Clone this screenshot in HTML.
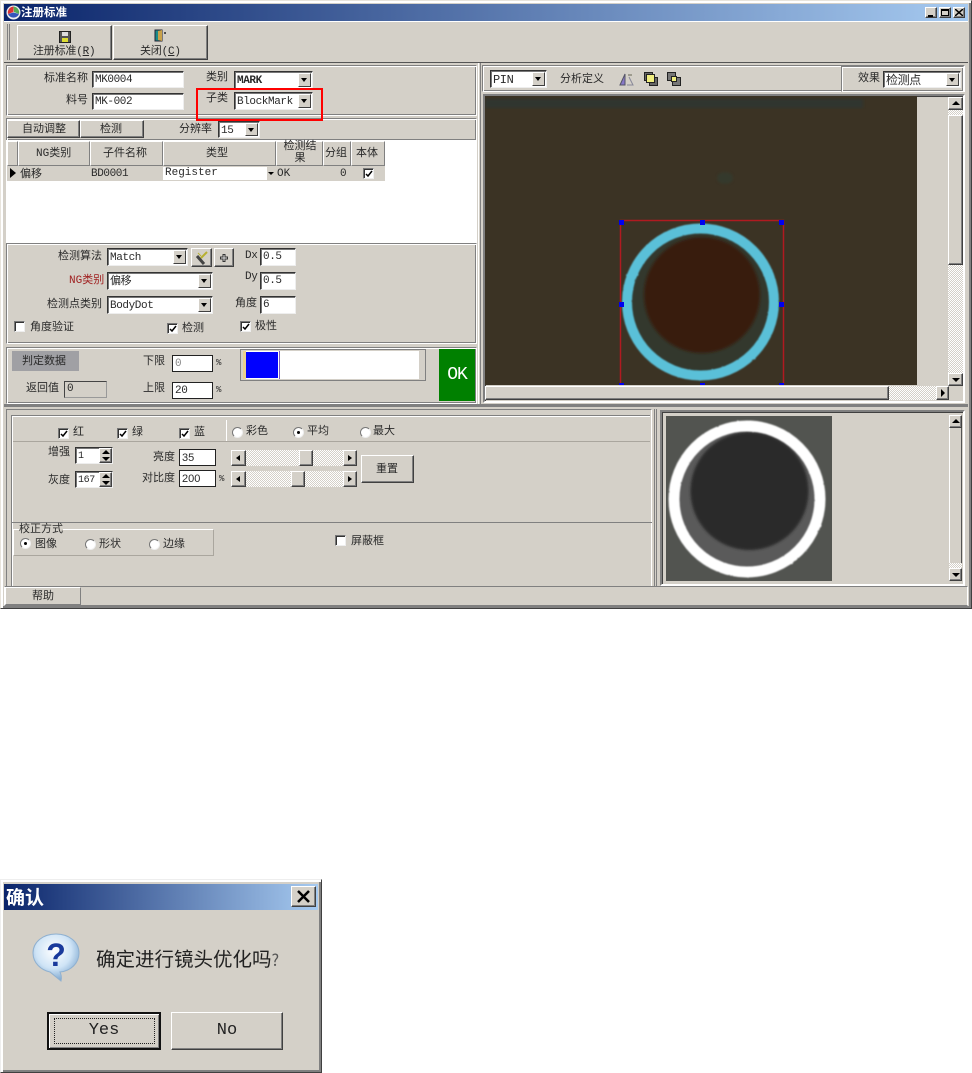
<!DOCTYPE html>
<html><head><meta charset="utf-8"><title>注册标准</title>
<style>
html,body{margin:0;padding:0;background:#fff}
body{position:relative;width:972px;height:1073px;overflow:hidden;font:11px/14px "Liberation Mono","WenQuanYi Zen Hei","Noto Sans CJK SC",monospace;color:#2a2a2a;filter:blur(.3px)}
div,span,i,b{box-sizing:border-box}
.a{position:absolute}
.t{position:absolute;white-space:nowrap;line-height:14px;margin-top:1px}
.g{background:#d4d0c8}
.up{background:#d4d0c8;border:1px solid;border-color:#fff #404040 #404040 #fff;box-shadow:inset -1px -1px 0 #808080}
.hd{background:#d4d0c8;border:1px solid;border-color:#fff #808080 #808080 #fff}
.fr{background:#d4d0c8;border:1px solid;border-color:#808080 #fff #fff #808080;box-shadow:inset 1px 1px 0 #fff,inset -1px -1px 0 #808080}
.in{position:absolute;background:#fff;border:1px solid;border-color:#333 #eee #eee #333;box-shadow:inset 1px 1px 0 #777;padding:2px 0 0 2px;white-space:nowrap;line-height:13px;overflow:hidden;letter-spacing:-.4px}
.in:has(.dd){padding-top:3px}
.dd{position:absolute;right:1px;top:1px;bottom:1px;width:13px;background:#d4d0c8;border:1px solid;border-color:#fff #404040 #404040 #fff}
.dd:after{content:"";position:absolute;left:2px;top:4px;border:3px solid transparent;border-top:4px solid #000;border-bottom:0}
.ck{position:absolute;width:11px;height:11px;background:#fff;border:1px solid;border-color:#777 #eee #eee #777;box-shadow:inset 1px 1px 0 #333}
.ck svg{position:absolute;left:1px;top:1px}
.rd{position:absolute;width:11px;height:11px;border-radius:50%;background:#fff;border:1px solid;border-color:#777 #eee #eee #777}
.rd.on:after{content:"";position:absolute;left:3px;top:3px;width:3px;height:3px;border-radius:50%;background:#000}
.ln{position:absolute;background:#808080}
.hatch{background:repeating-conic-gradient(#fff 0 25%,#d4d0c8 0 50%) 0 0/2px 2px}
.btn{position:absolute;text-align:center;color:#222}
.tri{position:absolute;width:0;height:0;border:3px solid transparent}
</style></head><body>

<!-- main window -->
<div class="a g" style="left:0;top:0;width:972px;height:609px;border:1px solid;border-color:#e8e4dc #404040 #404040 #e8e4dc;box-shadow:inset 2px 2px 0 #fff,inset -2px -2px 0 #808080"></div>

<!-- title bar -->
<div class="a" style="left:4px;top:4px;width:964px;height:17px;background:linear-gradient(90deg,#0a246a,#a6caf0)"></div>
<svg class="a" style="left:6px;top:5px" width="15" height="15" viewBox="0 0 15 15"><circle cx="7.500" cy="7.500" r="7" fill="#eee"/><path d="M7.500 1.500A6 6 0 0 0 2 9l5.500-2z" fill="#d33"/><path d="M7.500 1.500A6 6 0 0 1 13 9L8 7z" fill="#5a5"/><path d="M2 9a6 6 0 0 0 11 0l-5.500-1.500z" fill="#35b"/></svg>
<b class="t" style="left:21px;top:4px;color:#fff;font-size:11.500px;font-family:'Noto Sans CJK SC',sans-serif">注册标准</b>
<div class="a up" style="left:925px;top:7px;width:12px;height:11px"><div class="a" style="left:2px;top:7px;width:5px;height:2px;background:#000"></div></div>
<div class="a up" style="left:939px;top:7px;width:12px;height:11px"><div class="a" style="left:1px;top:1px;width:8px;height:7px;border:1px solid #000;border-top-width:2px"></div></div>
<div class="a up" style="left:953px;top:7px;width:12px;height:11px"><svg class="a" style="left:1px;top:1px" width="8" height="7"><path d="M0 0L8 7M8 0L0 7" stroke="#000" stroke-width="1.500"/></svg></div>

<!-- toolbar -->
<div class="ln" style="left:4px;top:21px;width:964px;height:1px;background:#fff"></div>
<div class="ln" style="left:7px;top:24px;width:1px;height:36px"></div>
<div class="ln" style="left:9px;top:24px;width:1px;height:36px"></div>
<div class="a up" style="left:17px;top:25px;width:95px;height:35px"></div>
<div class="a up" style="left:113px;top:25px;width:95px;height:35px"></div>
<svg class="a" style="left:59px;top:31px" width="12" height="12"><rect x=".5" y=".5" width="11" height="11" fill="#555" stroke="#222"/><rect x="3" y="1" width="6" height="4" fill="#ddd"/><rect x="3" y="7" width="6" height="4" fill="#dd3"/></svg>
<svg class="a" style="left:154px;top:29px" width="13" height="13"><rect x="1" y="1" width="7" height="11" fill="#1a8a8a" stroke="#223"/><path d="M4 2l4-1v11l-4-1z" fill="#c9a24a"/><path d="M10 4h2M11 3v2" stroke="#222"/></svg>
<span class="t" style="left:33px;top:44px;letter-spacing:-.2px">注册标准(<u>R</u>)</span>
<span class="t" style="left:140px;top:44px;letter-spacing:-.2px">关闭(<u>C</u>)</span>
<div class="ln" style="left:4px;top:62px;width:964px;height:1px;background:#555"></div>

<!-- panel 1 -->
<div class="a fr" style="left:6px;top:65px;width:471px;height:51px"></div>
<span class="t" style="left:44px;top:71px">标准名称</span>
<span class="t" style="left:66px;top:93px">料号</span>
<div class="in" style="left:92px;top:71px;width:92px;height:17px">MK0004</div>
<div class="in" style="left:92px;top:93px;width:92px;height:17px">MK-002</div>
<span class="t" style="left:206px;top:70px">类别</span>
<span class="t" style="left:206px;top:91px">子类</span>
<div class="in" style="left:234px;top:71px;width:79px;height:18px"><b>MARK</b><i class="dd"></i></div>
<div class="in" style="left:234px;top:92px;width:79px;height:18px">BlockMark<i class="dd"></i></div>

<!-- panel 2 -->
<div class="a fr" style="left:6px;top:118px;width:471px;height:23px"></div>
<div class="a up" style="left:7px;top:120px;width:73px;height:18px"></div>
<div class="a up" style="left:80px;top:120px;width:64px;height:18px"></div>
<span class="t" style="left:22px;top:122px">自动调整</span>
<span class="t" style="left:100px;top:122px">检测</span>
<span class="t" style="left:179px;top:122px">分辨率</span>
<div class="in" style="left:218px;top:121px;width:42px;height:17px">15<i class="dd"></i></div>

<!-- grid -->
<div class="a" style="left:6px;top:140px;width:471px;height:104px;background:#fff"></div>
<div class="a hd" style="left:7px;top:141px;width:11px;height:25px"></div>
<div class="a hd" style="left:18px;top:141px;width:72px;height:25px"></div>
<div class="a hd" style="left:90px;top:141px;width:73px;height:25px"></div>
<div class="a hd" style="left:163px;top:141px;width:113px;height:25px"></div>
<div class="a hd" style="left:276px;top:141px;width:47px;height:25px"></div>
<div class="a hd" style="left:323px;top:141px;width:28px;height:25px"></div>
<div class="a hd" style="left:351px;top:141px;width:34px;height:25px"></div>
<span class="t" style="left:36px;top:146px">NG类别</span>
<span class="t" style="left:103px;top:146px">子件名称</span>
<span class="t" style="left:206px;top:146px">类型</span>
<span class="t" style="left:282px;top:140px;width:36px;line-height:12px;white-space:normal;text-align:center">检测结果</span>
<span class="t" style="left:325px;top:146px">分组</span>
<span class="t" style="left:356px;top:146px">本体</span>
<div class="a g" style="left:7px;top:166px;width:378px;height:15px"></div>
<div class="tri" style="left:10px;top:168px;border-width:5px 0 5px 6px;border-color:transparent transparent transparent #000"></div>
<span class="t" style="left:20px;top:167px">偏移</span>
<span class="t" style="left:91px;top:166px;letter-spacing:-.4px">BD0001</span>
<div class="a" style="left:163px;top:167px;width:112px;height:13px;background:#fff;padding-left:2px;line-height:13px">Register<span class="a" style="right:0;top:0;width:8px;height:13px;background:#d4d0c8"></span><span class="tri" style="right:1px;top:5px;border-width:3px 3px 0;border-color:#000 transparent transparent"></span></div>
<span class="t" style="left:277px;top:166px">OK</span>
<span class="t" style="left:340px;top:166px">0</span>
<div class="ck" style="left:363px;top:168px"><svg width="8" height="8"><path d="M1 4l2 2 4-5" fill="none" stroke="#000" stroke-width="1.500"/></svg></div>

<!-- panel 3 -->
<div class="a fr" style="left:6px;top:243px;width:471px;height:101px"></div>
<span class="t" style="left:58px;top:249px">检测算法</span>
<span class="t" style="left:69px;top:273px;color:#a02020">NG类别</span>
<span class="t" style="left:47px;top:297px">检测点类别</span>
<div class="in" style="left:107px;top:248px;width:81px;height:18px">Match<i class="dd"></i></div>
<div class="in" style="left:107px;top:272px;width:106px;height:18px">偏移<i class="dd"></i></div>
<div class="in" style="left:107px;top:296px;width:106px;height:18px">BodyDot<i class="dd"></i></div>
<div class="a up" style="left:191px;top:248px;width:21px;height:19px"><svg class="a" style="left:3px;top:2px" width="14" height="14"><path d="M2 5l7 8" stroke="#444" stroke-width="3"/><path d="M6 7L12 1" stroke="#b8b030" stroke-width="2"/><path d="M3 2l3 3" stroke="#b8b030"/></svg></div>
<div class="a up" style="left:214px;top:248px;width:20px;height:19px"><svg class="a" style="left:4px;top:4px" width="10" height="10"><path d="M5 1v8M1 5h8" stroke="#333" stroke-width="3"/><path d="M5 2v6M2 5h6" stroke="#ddd"/></svg></div>
<span class="t" style="left:245px;top:248px;letter-spacing:-.4px">Dx</span>
<span class="t" style="left:245px;top:269px;letter-spacing:-.4px">Dy</span>
<span class="t" style="left:235px;top:296px">角度</span>
<div class="in" style="left:260px;top:248px;width:36px;height:18px">0.5</div>
<div class="in" style="left:260px;top:272px;width:36px;height:18px">0.5</div>
<div class="in" style="left:260px;top:296px;width:36px;height:18px">6</div>
<div class="ck" style="left:14px;top:321px"></div>
<span class="t" style="left:30px;top:320px">角度验证</span>
<div class="ck" style="left:167px;top:323px"><svg width="8" height="8"><path d="M1 4l2 2 4-5" fill="none" stroke="#000" stroke-width="1.500"/></svg></div>
<span class="t" style="left:182px;top:321px">检测</span>
<div class="ck" style="left:240px;top:321px"><svg width="8" height="8"><path d="M1 4l2 2 4-5" fill="none" stroke="#000" stroke-width="1.500"/></svg></div>
<span class="t" style="left:255px;top:319px">极性</span>

<!-- panel 4 -->
<div class="a fr" style="left:6px;top:347px;width:471px;height:57px"></div>
<div class="a" style="left:12px;top:351px;width:67px;height:20px;background:#a0a0a4"></div>
<span class="t" style="left:22px;top:354px">判定数据</span>
<span class="t" style="left:26px;top:381px">返回值</span>
<div class="a" style="left:64px;top:381px;width:43px;height:17px;border:1px solid;border-color:#444 #999 #999 #444;padding-left:2px;line-height:15px">0</div>
<span class="t" style="left:143px;top:354px">下限</span>
<span class="t" style="left:143px;top:381px">上限</span>
<div class="in" style="left:172px;top:355px;width:41px;height:17px;color:#888;box-shadow:none;border-color:#222">0</div>
<div class="in" style="left:172px;top:382px;width:41px;height:17px;box-shadow:none;border-color:#222">20</div>
<span class="t" style="left:216px;top:355px;font-size:9px">%</span>
<span class="t" style="left:216px;top:382px;font-size:9px">%</span>
<div class="a" style="left:240px;top:349px;width:186px;height:32px;border:1px solid #808080;background:#d4d0c8"></div>
<div class="a" style="left:243px;top:351px;width:176px;height:28px;background:#fff"></div>
<div class="a" style="left:243px;top:351px;width:3px;height:28px;background:#e8d090"></div>
<div class="a" style="left:246px;top:352px;width:32px;height:26px;background:#00f"></div>
<div class="a" style="left:279px;top:351px;width:1px;height:28px;background:#8060c0"></div>
<div class="a" style="left:439px;top:349px;width:36px;height:52px;background:#008000;color:#fff;font:18px/52px 'Liberation Mono',monospace;text-align:center;letter-spacing:-1px">OK</div>

<!-- right panel -->
<div class="a fr" style="left:482px;top:65px;width:483px;height:27px"></div>
<div class="in" style="left:490px;top:70px;width:57px;height:18px;font-size:12px">PIN<i class="dd"></i></div>
<span class="t" style="left:560px;top:72px">分析定义</span>
<svg class="a" style="left:619px;top:72px" width="16" height="14"><path d="M1 13L6 2v11z" fill="#8878c8" stroke="#556"/><path d="M8 13h6L10 5" fill="none" stroke="#889" /><path d="M9 3h4" stroke="#665"/></svg>
<svg class="a" style="left:643px;top:72px" width="16" height="14"><rect x="1.500" y=".5" width="8" height="8" fill="#666" stroke="#222"/><rect x="6.500" y="5.500" width="8" height="8" fill="#666" stroke="#222"/><rect x="3.500" y="2.500" width="8" height="8" fill="#f0ee80" stroke="#222"/></svg>
<svg class="a" style="left:666px;top:72px" width="16" height="14"><rect x="6.500" y="5.500" width="8" height="8" fill="#777" stroke="#222"/><rect x="1.500" y=".5" width="8" height="8" fill="#777" stroke="#222"/><rect x="5.500" y="4.500" width="5" height="5" fill="#f0ee80" stroke="#222"/></svg>
<div class="a fr" style="left:841px;top:66px;width:123px;height:26px"></div>
<span class="t" style="left:858px;top:71px">效果</span>
<div class="in" style="left:883px;top:71px;width:78px;height:17px;font-size:12px">检测点<i class="dd"></i></div>

<!-- image view -->
<div class="a g" style="left:483px;top:94px;width:482px;height:309px;border:2px solid;border-color:#808080 #fff #fff #808080;box-shadow:inset 1px 1px 0 #404040"></div>
<svg class="a" style="left:485px;top:96px" width="432" height="289" viewBox="485 96 432 289">
<defs><filter id="bl" x="-5%" y="-5%" width="110%" height="110%"><feTurbulence type="fractalNoise" baseFrequency=".35" numOctaves="1" seed="4"/><feDisplacementMap in="SourceGraphic" scale="1.200"/><feGaussianBlur stdDeviation="0.700"/></filter><filter id="sb"><feGaussianBlur stdDeviation="1.200"/></filter></defs>
<rect x="485" y="96" width="432" height="289" fill="#3b3324"/>
<rect x="485" y="99" width="378" height="9" fill="#27393a" opacity=".5" filter="url(#sb)"/>
<ellipse cx="725" cy="178" rx="8" ry="6" fill="#2f4034" opacity=".5" filter="url(#sb)"/>
<circle cx="701" cy="302" r="73" fill="#33382d"/>
<circle cx="702" cy="295" r="58" fill="#371e0f" filter="url(#sb)"/>
<circle cx="700.500" cy="302" r="73.500" fill="none" stroke="#5ac0d8" stroke-width="10" filter="url(#bl)"/>
<rect x="620.500" y="220.500" width="163" height="170" fill="none" stroke="#b01a20" stroke-width="1.500"/>
<g fill="#0000f0">
<rect x="619" y="220" width="5" height="5"/><rect x="700" y="220" width="5" height="5"/><rect x="779" y="220" width="5" height="5"/>
<rect x="619" y="302" width="5" height="5"/><rect x="779" y="302" width="5" height="5"/>
<rect x="619" y="383" width="5" height="5"/><rect x="700" y="383" width="5" height="5"/><rect x="779" y="383" width="5" height="5"/>
</g>
</svg>
<!-- v scroll -->
<div class="a g" style="left:948px;top:97px;width:15px;height:288px"></div>
<div class="a up" style="left:948px;top:97px;width:15px;height:13px"><div class="tri" style="left:3px;top:3px;border-width:0 4px 4px;border-color:transparent transparent #000"></div></div>
<div class="a up" style="left:948px;top:115px;width:15px;height:150px"></div>
<div class="a hatch" style="left:948px;top:110px;width:15px;height:5px"></div>
<div class="a hatch" style="left:948px;top:265px;width:15px;height:108px"></div>
<div class="a up" style="left:948px;top:373px;width:15px;height:13px"><div class="tri" style="left:3px;top:4px;border-width:4px 4px 0;border-color:#000 transparent transparent"></div></div>
<!-- h scroll -->
<div class="a up" style="left:485px;top:386px;width:404px;height:14px"></div>
<div class="a hatch" style="left:889px;top:386px;width:47px;height:14px"></div>
<div class="a up" style="left:936px;top:386px;width:13px;height:14px"><div class="tri" style="left:4px;top:2px;border-width:4px 0 4px 4px;border-color:transparent transparent transparent #000"></div></div>

<!-- divider -->
<div class="a" style="left:4px;top:404px;width:964px;height:3px;background:#808080"></div>
<div class="a" style="left:478px;top:63px;width:3px;height:341px;background:#d4d0c8;border-left:1px solid #fff;border-right:1px solid #808080"></div>

<!-- bottom left -->
<div class="a" style="left:6px;top:409px;width:646px;height:178px;border:1px solid;border-color:#808080 #fff #fff #808080"></div>
<div class="a" style="left:11px;top:415px;width:639px;height:172px;border-left:1px solid #808080;border-top:1px solid #808080;box-shadow:inset 1px 1px 0 #fff"></div>
<div class="ln" style="left:13px;top:441px;width:637px;height:1px;background:#aaa69e"></div>
<div class="ln" style="left:226px;top:420px;width:1px;height:21px;background:#fff"></div>
<div class="ck" style="left:58px;top:428px"><svg width="8" height="8"><path d="M1 4l2 2 4-5" fill="none" stroke="#000" stroke-width="1.500"/></svg></div>
<span class="t" style="left:73px;top:425px">红</span>
<div class="ck" style="left:117px;top:428px"><svg width="8" height="8"><path d="M1 4l2 2 4-5" fill="none" stroke="#000" stroke-width="1.500"/></svg></div>
<span class="t" style="left:132px;top:425px">绿</span>
<div class="ck" style="left:179px;top:428px"><svg width="8" height="8"><path d="M1 4l2 2 4-5" fill="none" stroke="#000" stroke-width="1.500"/></svg></div>
<span class="t" style="left:194px;top:425px">蓝</span>
<div class="rd" style="left:232px;top:427px"></div><span class="t" style="left:246px;top:424px">彩色</span>
<div class="rd on" style="left:293px;top:427px"></div><span class="t" style="left:307px;top:424px">平均</span>
<div class="rd" style="left:360px;top:427px"></div><span class="t" style="left:373px;top:424px">最大</span>

<span class="t" style="left:48px;top:445px">增强</span>
<span class="t" style="left:48px;top:473px">灰度</span>
<div class="in" style="left:75px;top:447px;width:38px;height:17px;font-size:10px">1</div>
<div class="in" style="left:75px;top:471px;width:38px;height:17px;font-size:10px">167</div>
<div class="a up" style="left:99px;top:448px;width:13px;height:15px"><div class="tri" style="left:2px;top:1px;border-width:0 4px 4px;border-color:transparent transparent #000"></div><div class="tri" style="left:2px;top:8px;border-width:4px 4px 0;border-color:#000 transparent transparent"></div></div>
<div class="a up" style="left:99px;top:472px;width:13px;height:15px"><div class="tri" style="left:2px;top:1px;border-width:0 4px 4px;border-color:transparent transparent #000"></div><div class="tri" style="left:2px;top:8px;border-width:4px 4px 0;border-color:#000 transparent transparent"></div></div>
<span class="t" style="left:153px;top:450px">亮度</span>
<span class="t" style="left:142px;top:471px">对比度</span>
<div class="in" style="left:179px;top:449px;width:37px;height:17px;box-shadow:none;border-color:#222;font-family:'Liberation Sans',sans-serif;letter-spacing:0">35</div>
<div class="in" style="left:179px;top:470px;width:37px;height:17px;box-shadow:none;border-color:#222;font-family:'Liberation Sans',sans-serif;letter-spacing:0">200</div>
<span class="t" style="left:219px;top:471px;font-size:9px">%</span>

<div class="a hatch" style="left:231px;top:450px;width:126px;height:16px"></div>
<div class="a up" style="left:231px;top:450px;width:15px;height:16px"><div class="tri" style="left:4px;top:4px;border-width:3px 4px 3px 0;border-color:transparent #000 transparent transparent"></div></div>
<div class="a up" style="left:299px;top:450px;width:14px;height:16px"></div>
<div class="a up" style="left:343px;top:450px;width:14px;height:16px"><div class="tri" style="left:4px;top:4px;border-width:3px 0 3px 4px;border-color:transparent transparent transparent #000"></div></div>
<div class="a hatch" style="left:231px;top:471px;width:126px;height:16px"></div>
<div class="a up" style="left:231px;top:471px;width:15px;height:16px"><div class="tri" style="left:4px;top:4px;border-width:3px 4px 3px 0;border-color:transparent #000 transparent transparent"></div></div>
<div class="a up" style="left:291px;top:471px;width:14px;height:16px"></div>
<div class="a up" style="left:343px;top:471px;width:14px;height:16px"><div class="tri" style="left:4px;top:4px;border-width:3px 0 3px 4px;border-color:transparent transparent transparent #000"></div></div>
<div class="a up" style="left:361px;top:455px;width:53px;height:28px"></div>
<span class="t" style="left:376px;top:462px">重置</span>

<div class="ln" style="left:12px;top:522px;width:640px;height:1px"></div>
<div class="a" style="left:13px;top:529px;width:201px;height:27px;border:1px solid;border-color:#fff #aaa69e #aaa69e #fff"></div>
<span class="t g" style="left:19px;top:523px;line-height:13px">校正方式</span>
<div class="rd on" style="left:20px;top:538px"></div><span class="t" style="left:35px;top:537px">图像</span>
<div class="rd" style="left:85px;top:539px"></div><span class="t" style="left:99px;top:537px">形状</span>
<div class="rd" style="left:149px;top:539px"></div><span class="t" style="left:163px;top:537px">边缘</span>
<div class="ck" style="left:335px;top:535px"></div>
<span class="t" style="left:351px;top:534px">屏蔽框</span>

<!-- bottom right -->
<div class="a" style="left:654px;top:409px;width:3px;height:178px;border-left:1px solid #808080;border-right:1px solid #808080"></div>
<div class="a" style="left:660px;top:410px;width:305px;height:176px;border:2px solid;border-color:#808080 #fff #fff #808080;box-shadow:inset 1px 1px 0 #404040"></div>
<svg class="a" style="left:666px;top:416px" width="166" height="165" viewBox="666 416 166 165">
<rect x="666" y="416" width="166" height="165" fill="#525450"/>
<circle cx="747" cy="499" r="74" fill="#5a5a5a"/>
<circle cx="749.500" cy="491" r="59" fill="#2c2c2c" filter="url(#sb)"/>
<circle cx="747" cy="499" r="73" fill="none" stroke="#fff" stroke-width="11" filter="url(#bl)"/>
</svg>
<div class="a g" style="left:949px;top:415px;width:13px;height:166px;border-left:1px solid #fff;border-right:1px solid #555"></div>
<div class="a up" style="left:949px;top:415px;width:13px;height:13px"><div class="tri" style="left:2px;top:3px;border-width:0 4px 4px;border-color:transparent transparent #000"></div></div>
<div class="a hatch" style="left:949px;top:563px;width:13px;height:5px"></div>
<div class="a up" style="left:949px;top:568px;width:13px;height:13px"><div class="tri" style="left:2px;top:4px;border-width:4px 4px 0;border-color:#000 transparent transparent"></div></div>

<!-- status bar -->
<div class="a" style="left:4px;top:586px;width:964px;height:20px;border:1px solid;border-color:#808080 #fff #808080 #fff"></div>
<div class="a" style="left:5px;top:587px;width:76px;height:18px;border:1px solid;border-color:#fff #808080 #808080 #fff"></div>
<span class="t" style="left:32px;top:589px">帮助</span>

<!-- red highlight -->
<div class="a" style="left:196px;top:88px;width:127px;height:33px;border:2px solid #f00"></div>

<!-- dialog -->
<div class="a g" style="left:0;top:879px;width:322px;height:194px;border:1px solid;border-color:#eee #404040 #404040 #eee;box-shadow:inset 2px 2px 0 #fff,inset -2px -2px 0 #808080"></div>
<div class="a" style="left:4px;top:884px;width:314px;height:26px;background:linear-gradient(90deg,#0a246a,#a6caf0)"></div>
<b class="t" style="left:6px;top:886px;color:#fff;font:bold 19px/20px 'Noto Sans CJK SC',sans-serif">确认</b>
<div class="a up" style="left:291px;top:886px;width:25px;height:21px"><svg class="a" style="left:5px;top:3px" width="13" height="13"><path d="M1 1L12 12M12 1L1 12" stroke="#000" stroke-width="2.500"/></svg></div>
<svg class="a" style="left:32px;top:933px" width="50" height="50" viewBox="0 0 50 50">
<defs><radialGradient id="q" cx=".45" cy=".35" r=".7"><stop offset="0" stop-color="#fff"/><stop offset=".55" stop-color="#cfe4f6"/><stop offset="1" stop-color="#6f9cc8"/></radialGradient></defs>
<path d="M24 1C11 1 1 9 1 20c0 10 8 17 17 19l11 9c1-3 0-7-1-9 11-1 19-9 19-19C47 9 37 1 24 1z" fill="url(#q)" stroke="#8fb0d0"/>
<text x="24" y="33" font-family="'Liberation Sans',sans-serif" font-weight="bold" font-size="32" fill="#1a3a9c" text-anchor="middle">?</text>
</svg>
<span class="t" style="left:96px;top:947px;font:19.500px/22px 'Noto Sans CJK SC',sans-serif;color:#222;margin-top:0">确定进行镜头优化吗<span style="font-size:16px;color:#555">?</span></span>
<div class="a" style="left:47px;top:1012px;width:114px;height:38px;background:#d4d0c8;border:2px solid #111;box-shadow:inset 1px 1px 0 #fff,inset -1px -1px 0 #808080"></div>
<div class="a" style="left:54px;top:1018px;width:101px;height:26px;border:1px dotted #222"></div>
<span class="btn" style="left:47px;top:1019px;width:114px;font:17px/24px 'Liberation Mono',monospace">Yes</span>
<div class="a up" style="left:171px;top:1012px;width:112px;height:38px"></div>
<span class="btn" style="left:171px;top:1019px;width:112px;font:17px/24px 'Liberation Mono',monospace">No</span>
</body></html>
